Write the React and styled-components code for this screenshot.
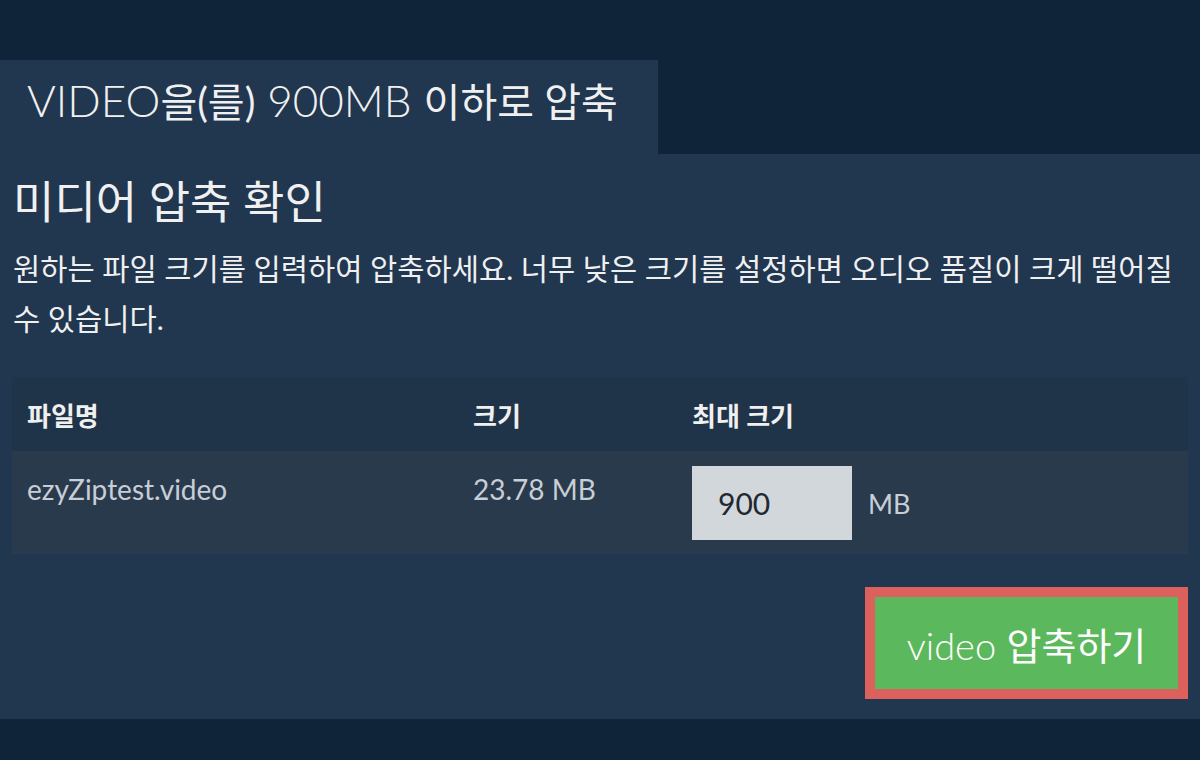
import React from 'react';
import styled, { createGlobalStyle } from 'styled-components';

const GlobalStyle = createGlobalStyle`
    html, body {
        margin: 0;
        padding: 0;
        background-color: #0f2339;
    }

    body {
        font-family: Lato, "Noto Sans CJK KR", sans-serif;
        color: #eeeeee;
    }
`;

const files = [
    { name: 'ezyZiptest.video', size: '23.78 MB', max: '900' },
];

const App = () => {
    return (
        <Page>
            <GlobalStyle />
            <Tab>VIDEO<TabKo>을(를)</TabKo> 900MB <TabKo>이하로 압축</TabKo></Tab>
            <Panel>
                <Heading>미디어 압축 확인</Heading>
                <Description>
                    원하는 파일 크기를 입력하여 압축하세요. 너무 낮은 크기를 설정하면 오디오 품질이 크게 떨어질 수 있습니다.
                </Description>
                <Table>
                    <thead>
                        <tr>
                            <HeadCell $width="446px">파일명</HeadCell>
                            <HeadCell $width="219px">크기</HeadCell>
                            <HeadCell>최대 크기</HeadCell>
                        </tr>
                    </thead>
                    <tbody>
                        {files.map((file) => (
                            <BodyRow key={file.name}>
                                <TextCell>{file.name}</TextCell>
                                <TextCell>{file.size}</TextCell>
                                <InputCell>
                                    <SizeField>
                                        <SizeInput type="text" defaultValue={file.max} />
                                        <Unit>MB</Unit>
                                    </SizeField>
                                </InputCell>
                            </BodyRow>
                        ))}
                    </tbody>
                </Table>
                <Actions>
                    <CompressButton>video <Ko>압축하기</Ko></CompressButton>
                </Actions>
            </Panel>
        </Page>
    )
}

export default App;


const Page = styled.div`
    min-height: 100vh;
    padding-top: 60px;
    box-sizing: border-box;
    background-color: #0f2339;
`;

const Ko = styled.span`
    font-weight: 400;
`;

const TabKo = styled(Ko)`
    font-size: 40px;
`;

const Tab = styled.div`
    width: 658px;
    height: 94px;
    box-sizing: border-box;
    padding-left: 27px;
    background-color: #21364f;
    font-size: 44px;
    font-weight: 300;
    line-height: 80px;
    color: #f0f0f0;
    white-space: nowrap;
`;

const Panel = styled.div`
    height: 565px;
    box-sizing: border-box;
    padding: 21px 12px 20px 13px;
    background-color: #21364f;
`;

const Heading = styled.h2`
    margin: 0;
    font-size: 45px;
    font-weight: 400;
    line-height: 54px;
    color: #f0f0f0;
`;

const Description = styled.p`
    margin: 15px 0 0;
    font-size: 29.6px;
    font-weight: 400;
    line-height: 50px;
    color: #f0f0f0;
    word-break: keep-all;
`;

const Table = styled.table`
    width: 1176px;
    margin: 33px 0 0 -1px;
    border-collapse: collapse;
    table-layout: fixed;
`;

const HeadCell = styled.th`
    width: ${(props) => props.$width || 'auto'};
    height: 74px;
    box-sizing: border-box;
    padding: 0 15px;
    background-color: #1f3349;
    text-align: left;
    vertical-align: middle;
    font-size: 26px;
    font-weight: 700;
    color: #f0f0f0;
`;

const BodyRow = styled.tr`
    background-color: #2a3a4d;
`;

const TextCell = styled.td`
    height: 103px;
    box-sizing: border-box;
    padding: 18px 15px 0;
    vertical-align: top;
    font-size: 28px;
    line-height: 40px;
    color: #c8ced5;
`;

const InputCell = styled.td`
    padding: 15px 15px 0;
    vertical-align: top;
`;

const SizeField = styled.div`
    display: flex;
    align-items: center;
    gap: 16px;
`;

const SizeInput = styled.input`
    width: 160px;
    height: 74px;
    box-sizing: border-box;
    padding: 0 0 0 26px;
    border: none;
    border-radius: 0;
    outline: none;
    background-color: #d2d7dc;
    font-family: Lato, sans-serif;
    font-size: 30px;
    color: #222831;
`;

const Unit = styled.span`
    font-size: 27px;
    color: #c8ced5;
`;

const Actions = styled.div`
    display: flex;
    justify-content: flex-end;
    margin-top: 33px;
`;

const CompressButton = styled.button`
    width: 323px;
    height: 112px;
    box-sizing: border-box;
    padding: 0;
    border: 10px solid #dc605c;
    border-radius: 0;
    background-color: #5cb85c;
    font-family: Lato, "Noto Sans CJK KR", sans-serif;
    font-size: 38px;
    font-weight: 300;
    color: #ffffff;
    cursor: pointer;
`;
